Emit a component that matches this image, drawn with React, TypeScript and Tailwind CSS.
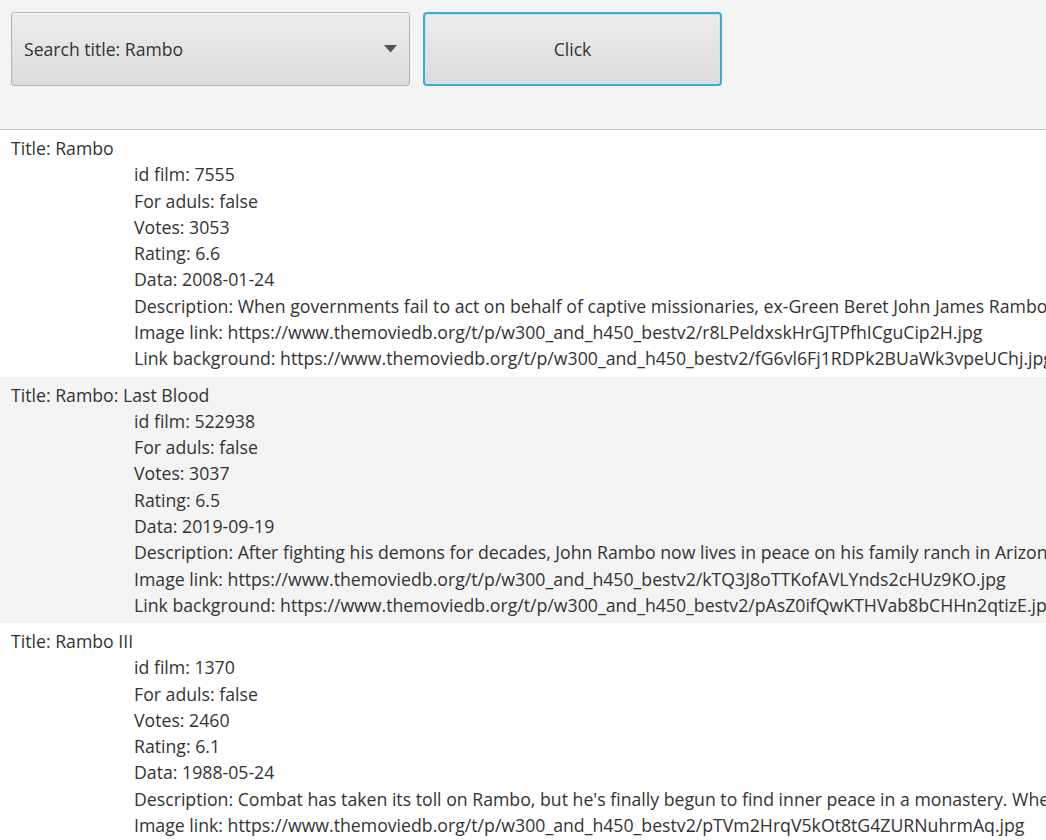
import React from "react";

const films = [
  {
    title: "Rambo",
    id: "7555",
    adult: "false",
    votes: "3053",
    rating: "6.6",
    date: "2008-01-24",
    description:
      "When governments fail to act on behalf of captive missionaries, ex-Green Beret John James Rambo sets aside his peaceful existence along the Salween River.",
    image: "https://www.themoviedb.org/t/p/w300_and_h450_bestv2/r8LPeldxskHrGJTPfhICguCip2H.jpg",
    background: "https://www.themoviedb.org/t/p/w300_and_h450_bestv2/fG6vl6Fj1RDPk2BUaWk3vpeUChj.jpg",
  },
  {
    title: "Rambo: Last Blood",
    id: "522938",
    adult: "false",
    votes: "3037",
    rating: "6.5",
    date: "2019-09-19",
    description:
      "After fighting his demons for decades, John Rambo now lives in peace on his family ranch in Arizona, but his rest is interrupted.",
    image: "https://www.themoviedb.org/t/p/w300_and_h450_bestv2/kTQ3J8oTTKofAVLYnds2cHUz9KO.jpg",
    background: "https://www.themoviedb.org/t/p/w300_and_h450_bestv2/pAsZ0ifQwKTHVab8bCHHn2qtizE.jpg",
  },
  {
    title: "Rambo III",
    id: "1370",
    adult: "false",
    votes: "2460",
    rating: "6.1",
    date: "1988-05-24",
    description:
      "Combat has taken its toll on Rambo, but he's finally begun to find inner peace in a monastery. When Rambo's friend and mentor Col. Trautman asks for his help.",
    image: "https://www.themoviedb.org/t/p/w300_and_h450_bestv2/pTVm2HrqV5kOt8tG4ZURNuhrmAq.jpg",
    background: "https://www.themoviedb.org/t/p/w300_and_h450_bestv2/a2tys4sD7xzVaogPntGsT1ypVoT.jpg",
  },
];

export default function App() {
  return (
    <div
      className="h-[840px] w-[1046px] overflow-hidden bg-white text-[#333333]"
      style={{ fontFamily: "'Open Sans', 'Noto Sans', sans-serif" }}
    >
      {/* Toolbar */}
      <div className="flex h-[130px] gap-[13px] border-b border-[#c8c8c8] bg-[#f4f4f4] px-[11px] pt-[12px]">
        <div className="flex h-[74px] w-[399px] items-center justify-between rounded-[3px] border border-[#b5b5b5] bg-gradient-to-b from-[#ededed] to-[#dbdbdb] pl-[12px] pr-[12px] shadow-[inset_0_1px_0_#f8f8f8]">
          <span className="text-[17.6px]">Search title: Rambo</span>
          <svg width="13" height="8" viewBox="0 0 13 8">
            <path d="M0 0 L13 0 L6.5 7.5 Z" fill="#555555" />
          </svg>
        </div>
        <div className="flex h-[74px] w-[299px] items-center justify-center rounded-[4px] border-2 border-[#3fa8d4] bg-gradient-to-b from-[#ededed] to-[#dbdbdb] shadow-[inset_0_0_0_1px_#c9e6f2]">
          <span className="text-[17.6px]">Click</span>
        </div>
      </div>

      {/* Results */}
      <div className="flex flex-col">
        {films.map((f, i) => (
          <div
            key={f.id}
            className={
              "h-[246.5px] shrink-0 whitespace-nowrap py-[5px] text-[17.7px] leading-[26.3px] " +
              (i % 2 === 1 ? "bg-[#f4f4f4]" : "bg-white")
            }
          >
            <div className="pl-[11px]">Title: {f.title}</div>
            <div className="pl-[134px]">
              <div>id film: {f.id}</div>
              <div>For aduls: {f.adult}</div>
              <div>Votes: {f.votes}</div>
              <div>Rating: {f.rating}</div>
              <div>Data: {f.date}</div>
              <div>Description: {f.description}</div>
              <div>Image link: {f.image}</div>
              <div>Link background: {f.background}</div>
            </div>
          </div>
        ))}
      </div>
    </div>
  );
}
